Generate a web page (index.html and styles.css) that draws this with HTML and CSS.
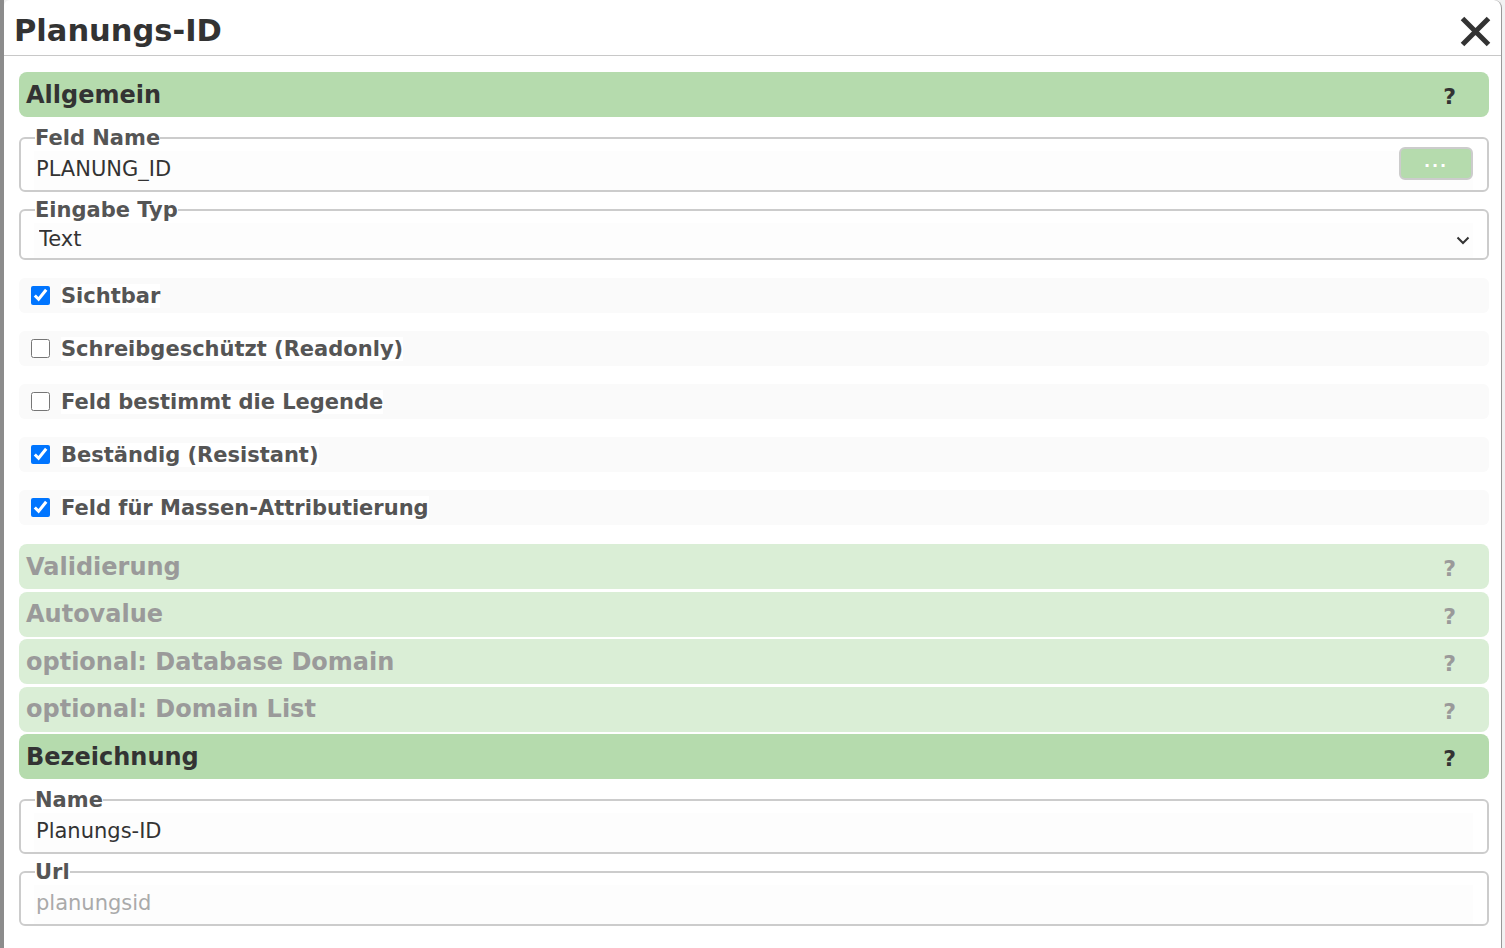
FILE: index.html
```html
<!DOCTYPE html>
<html lang="de">
<head>
<meta charset="utf-8">
<title>Planungs-ID</title>
<link rel="stylesheet" href="styles.css">
</head>
<body>
<div class="modal">
  <div class="modal-head">
    <h1 class="modal-title">Planungs-ID</h1>
    <button class="close-btn" aria-label="Schließen">
      <svg width="31" height="31" viewBox="0 0 31 31"><path d="M2.5 2.5 L28.5 28.5 M28.5 2.5 L2.5 28.5" stroke="#333" stroke-width="5" stroke-linecap="butt" fill="none"/></svg>
    </button>
  </div>
  <div class="modal-body">
    <div class="section active"><span class="section-title">Allgemein</span><span class="help">?</span></div>

    <fieldset class="field">
      <legend>Feld Name</legend>
      <div class="field-row">
        <input class="field-input" type="text" value="PLANUNG_ID">
        <button class="dots-btn">...</button>
      </div>
    </fieldset>

    <fieldset class="field">
      <legend>Eingabe Typ</legend>
      <div class="field-row short">
        <select class="field-select"><option>Text</option></select>
        <svg class="chevron" width="14" height="9" viewBox="0 0 14 9"><path d="M1.5 1.5 L7 7 L12.5 1.5" stroke="#333" stroke-width="2" fill="none"/></svg>
      </div>
    </fieldset>

    <div class="checks">
      <label class="check-row"><input type="checkbox" checked><span>Sichtbar</span></label>
      <label class="check-row"><input type="checkbox"><span>Schreibgeschützt (Readonly)</span></label>
      <label class="check-row"><input type="checkbox"><span>Feld bestimmt die Legende</span></label>
      <label class="check-row"><input type="checkbox" checked><span>Beständig (Resistant)</span></label>
      <label class="check-row"><input type="checkbox" checked><span>Feld für Massen-Attributierung</span></label>
    </div>

    <div class="sections">
      <div class="section"><span class="section-title">Validierung</span><span class="help">?</span></div>
      <div class="section"><span class="section-title">Autovalue</span><span class="help">?</span></div>
      <div class="section"><span class="section-title">optional: Database Domain</span><span class="help">?</span></div>
      <div class="section"><span class="section-title">optional: Domain List</span><span class="help">?</span></div>
      <div class="section active"><span class="section-title">Bezeichnung</span><span class="help">?</span></div>
    </div>

    <fieldset class="field">
      <legend>Name</legend>
      <div class="field-row">
        <input class="field-input" type="text" value="Planungs-ID">
      </div>
    </fieldset>

    <fieldset class="field">
      <legend>Url</legend>
      <div class="field-row">
        <input class="field-input muted" type="text" value="planungsid" readonly>
      </div>
    </fieldset>
  </div>
</div>
</body>
</html>
```
FILE: styles.css
```css
* { box-sizing: border-box; }
html, body { margin: 0; padding: 0; height: 100%; }
body {
  background: linear-gradient(to right, #8c8c8c 0, #8c8c8c 4px, #f2f2f2 4px);
  font-family: "DejaVu Sans", Verdana, sans-serif;
  color: #333;
  overflow: hidden;
}
.modal {
  margin-left: 4px;
  width: 1498px;
  height: 948px;
  background: #fff;
  border-right: 1px solid #999;
  border-top-left-radius: 6px;
  border-top-right-radius: 8px;
}
.modal-head {
  height: 56px;
  border-bottom: 1px solid #c8c8c8;
  display: flex;
  align-items: center;
  justify-content: space-between;
  padding: 0 10px 0 10px;
}
.modal-title {
  margin: 0;
  font-size: 30.5px;
  font-weight: bold;
  color: #333;
  padding-top: 6px;
}
.close-btn {
  background: none;
  border: 0;
  padding: 0;
  width: 31px;
  height: 31px;
  margin-top: 7px;
}
.modal-body {
  padding: 16px 12px 0 15px;
}
.section {
  height: 45px;
  border-radius: 8px;
  background: #daeed6;
  color: #9a9a9a;
  display: flex;
  align-items: center;
  justify-content: space-between;
  padding: 0 33px 0 7px;
  font-weight: bold;
  font-size: 24px;
}
.section.active {
  background: #b5dbad;
  color: #333;
}
.help { font-size: 22px; padding-top: 4px; }
.sections {
  display: flex;
  flex-direction: column;
  gap: 2.5px;
  margin-top: 19px;
}
.field {
  margin: 8px 0 0 0;
  padding: 0 14px 0 13px;
  border: 2px solid #cccccc;
  border-radius: 6px;
  min-width: 0;
}
.field + .field { margin-top: 5px; }
.sections + .field { margin-top: 8px; }
.field legend {
  padding: 0;
  font-size: 21px;
  line-height: 26px;
  font-weight: bold;
  color: #555;
  margin-left: 1px;
}
.field-row {
  display: flex;
  align-items: center;
  height: 39px;
  background: #fdfdfd;
}
.field-row.short { height: 35px; }
.field-input {
  flex: 1;
  border: 0;
  background: transparent;
  font-family: "DejaVu Sans", Verdana, sans-serif;
  font-size: 21px;
  color: #333;
  padding: 0 2px 4px 2px;
  outline: none;
  height: 39px;
}
.field-input.muted { color: #aaa; }
.dots-btn {
  align-self: flex-start;
  width: 74px;
  height: 33px;
  background: #b5dbad;
  border: 2px solid #cccccc;
  border-radius: 6px;
  color: #fff;
  font-family: "DejaVu Sans", Verdana, sans-serif;
  font-weight: bold;
  font-size: 16px;
  letter-spacing: 2px;
  padding: 0 0 4px 0;
  margin-top: -4px;
}
.field-select {
  flex: 1;
  appearance: none;
  -webkit-appearance: none;
  border: 0;
  background: transparent;
  font-family: "DejaVu Sans", Verdana, sans-serif;
  font-size: 21px;
  color: #333;
  padding: 0 5px 3px 5px;
  outline: none;
  height: 35px;
}
.chevron { margin-right: 3px; }
.checks {
  display: flex;
  flex-direction: column;
  gap: 18px;
  margin-top: 18px;
}
.check-row {
  display: flex;
  align-items: center;
  height: 35px;
  background: #fafafa;
  border-radius: 6px;
  padding-left: 12px;
}
.check-row input {
  width: 19px;
  height: 19px;
  margin: 0 11px 0 0;
  accent-color: #0075ff;
}
.check-row span {
  font-size: 21px;
  font-weight: bold;
  color: #555;
  background: #fff;
}
```
